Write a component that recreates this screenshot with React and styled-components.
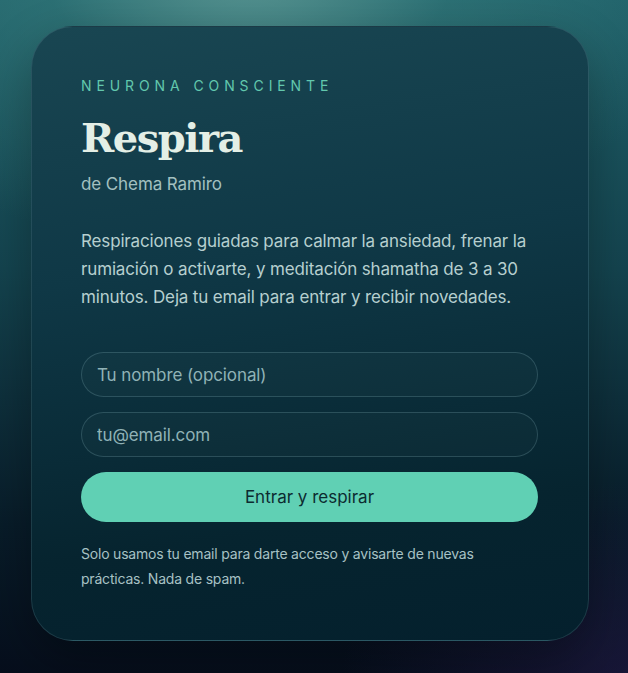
import React from "react";
import styled, { createGlobalStyle } from "styled-components";

const Global = createGlobalStyle`
  html, body { margin: 0; padding: 0; }
  body {
    min-height: 673px;
    background:
      radial-gradient(ellipse 460px 300px at 250px -40px, rgba(100,160,155,0.9) 0%, rgba(55,125,125,0.55) 45%, rgba(30,90,100,0) 100%),
      radial-gradient(ellipse 300px 200px at 640px 680px, rgba(40,30,80,0.55) 0%, rgba(20,20,50,0) 100%),
      linear-gradient(180deg, #1f6069 0%, #14444f 40%, #081c29 78%, #060e1c 100%);
    font-family: Inter, "Noto Sans", sans-serif;
  }
`;

const Page = styled.main`
  box-sizing: border-box;
  width: 628px;
  min-height: 673px;
  padding: 26px 39px 32px 31px;
  display: flex;
  align-items: flex-start;
`;

const Card = styled.section`
  box-sizing: border-box;
  width: 558px;
  height: 615px;
  padding: 50px 50px 50px 49px;
  border-radius: 42px;
  border: 1px solid rgba(160, 210, 215, 0.15);
  background: linear-gradient(172deg, #194652 0%, #0f3846 38%, #06242f 78%, #04202d 100%);
  box-shadow: 0 20px 50px rgba(0, 0, 0, 0.3);
  display: flex;
  flex-direction: column;
`;

const Eyebrow = styled.div`
  font-size: 14px;
  letter-spacing: 4.9px;
  color: #62c8ad;
  line-height: 18px;
  text-transform: uppercase;
`;

const Title = styled.h1`
  margin: 18px 0 0;
  font-family: "DejaVu Serif", "Liberation Serif", serif;
  font-weight: 700;
  font-size: 40px;
  line-height: 50px;
  letter-spacing: -1.5px;
  color: #e4efe6;
`;

const Author = styled.div`
  margin-top: 10px;
  font-size: 17px;
  line-height: 22px;
  color: #a2c0c0;
  letter-spacing: -0.1px;
`;

const Lead = styled.p`
  margin: 32px 0 0;
  font-size: 17px;
  line-height: 28px;
  color: #b6cfcf;
  letter-spacing: -0.15px;
`;

const Form = styled.form`
  margin-top: 41px;
  display: flex;
  flex-direction: column;
  gap: 15px;
`;

const Field = styled.input`
  box-sizing: border-box;
  width: 100%;
  height: 45px;
  border-radius: 23px;
  border: 1px solid rgba(160, 210, 215, 0.2);
  background: rgba(255, 255, 255, 0.02);
  padding: 0 15px;
  font-family: inherit;
  font-size: 17px;
  color: #e0ecec;
  outline: none;
  letter-spacing: -0.1px;
  &::placeholder { color: #90b2b6; }
`;

const Submit = styled.button`
  height: 50px;
  border: none;
  border-radius: 25px;
  background: #60d0b4;
  color: #0c2b30;
  font-family: inherit;
  font-size: 17px;
  cursor: pointer;
`;

const Note = styled.p`
  margin: 19px 0 0;
  max-width: 410px;
  font-size: 14px;
  line-height: 25px;
  color: #a7c1c4;
  letter-spacing: -0.2px;
`;

export default function App() {
  return (
    <>
      <Global />
      <Page>
        <Card>
          <Eyebrow>Neurona Consciente</Eyebrow>
          <Title>Respira</Title>
          <Author>de Chema Ramiro</Author>
          <Lead>
            Respiraciones guiadas para calmar la ansiedad, frenar la rumiación o activarte, y meditación shamatha de 3 a 30 minutos. Deja tu email para entrar y recibir novedades.
          </Lead>
          <Form onSubmit={(e) => e.preventDefault()}>
            <Field type="text" placeholder="Tu nombre (opcional)" />
            <Field type="email" placeholder="tu@email.com" />
            <Submit type="submit">Entrar y respirar</Submit>
          </Form>
          <Note>
            Solo usamos tu email para darte acceso y avisarte de nuevas prácticas. Nada de spam.
          </Note>
        </Card>
      </Page>
    </>
  );
}
